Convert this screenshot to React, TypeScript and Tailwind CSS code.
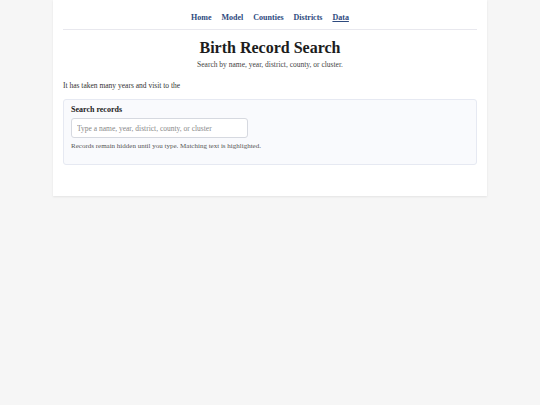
import { useState } from 'react';

const links = ['Home', 'Model', 'Counties', 'Districts', 'Data'];

const App = () => {
  const [query, setQuery] = useState('');

  return (
    <div className="min-h-[405px] bg-[#f6f6f6] font-['Liberation_Serif',serif] text-[#222]">
      <div className="mx-auto w-[434px] bg-white px-[10px] pb-[31px] shadow-[0_1px_2px_rgba(0,0,0,0.08)]">
        <nav className="flex justify-center gap-[10px] border-b border-[#e8e8ee] pt-[13px] pb-[6px] text-[8px] leading-[10px] font-bold">
          {links.map((link) => (
            <a
              key={link}
              href="#"
              className={link === 'Data' ? 'text-[#2e4a7e] underline' : 'text-[#2e4a7e]'}
            >
              {link}
            </a>
          ))}
        </nav>

        <header className="pt-[8px] text-center">
          <h1 className="text-[16px] leading-[20px] font-bold text-[#1c1c1c]">Birth Record Search</h1>
          <p className="mt-[2px] text-[7.5px] leading-[10px] text-[#444]">Search by name, year, district, county, or cluster.</p>
        </header>

        <p className="mt-[11px] text-[7.5px] leading-[10px] text-[#333]">It has taken many years and visit to the</p>

        <section className="mt-[8px] rounded-[3px] border border-[#e6e9f2] bg-[#f9fafd] px-[7px] pt-[5px] pb-[13px]">
          <label className="block text-[8px] leading-[10px] font-bold text-[#222]">Search records</label>
          <input
            value={query}
            onChange={(e) => setQuery(e.target.value)}
            placeholder="Type a name, year, district, county, or cluster"
            className="mt-[3px] block h-[20px] w-[177px] rounded-[3px] border border-[#d6d9e0] bg-white px-[5px] text-[7.5px] text-[#333] placeholder:text-[#888] outline-none"
          />
          <p className="mt-[3px] text-[7px] leading-[10px] text-[#555]">Records remain hidden until you type. Matching text is highlighted.</p>
        </section>
      </div>
    </div>
  );
};

export default App;
